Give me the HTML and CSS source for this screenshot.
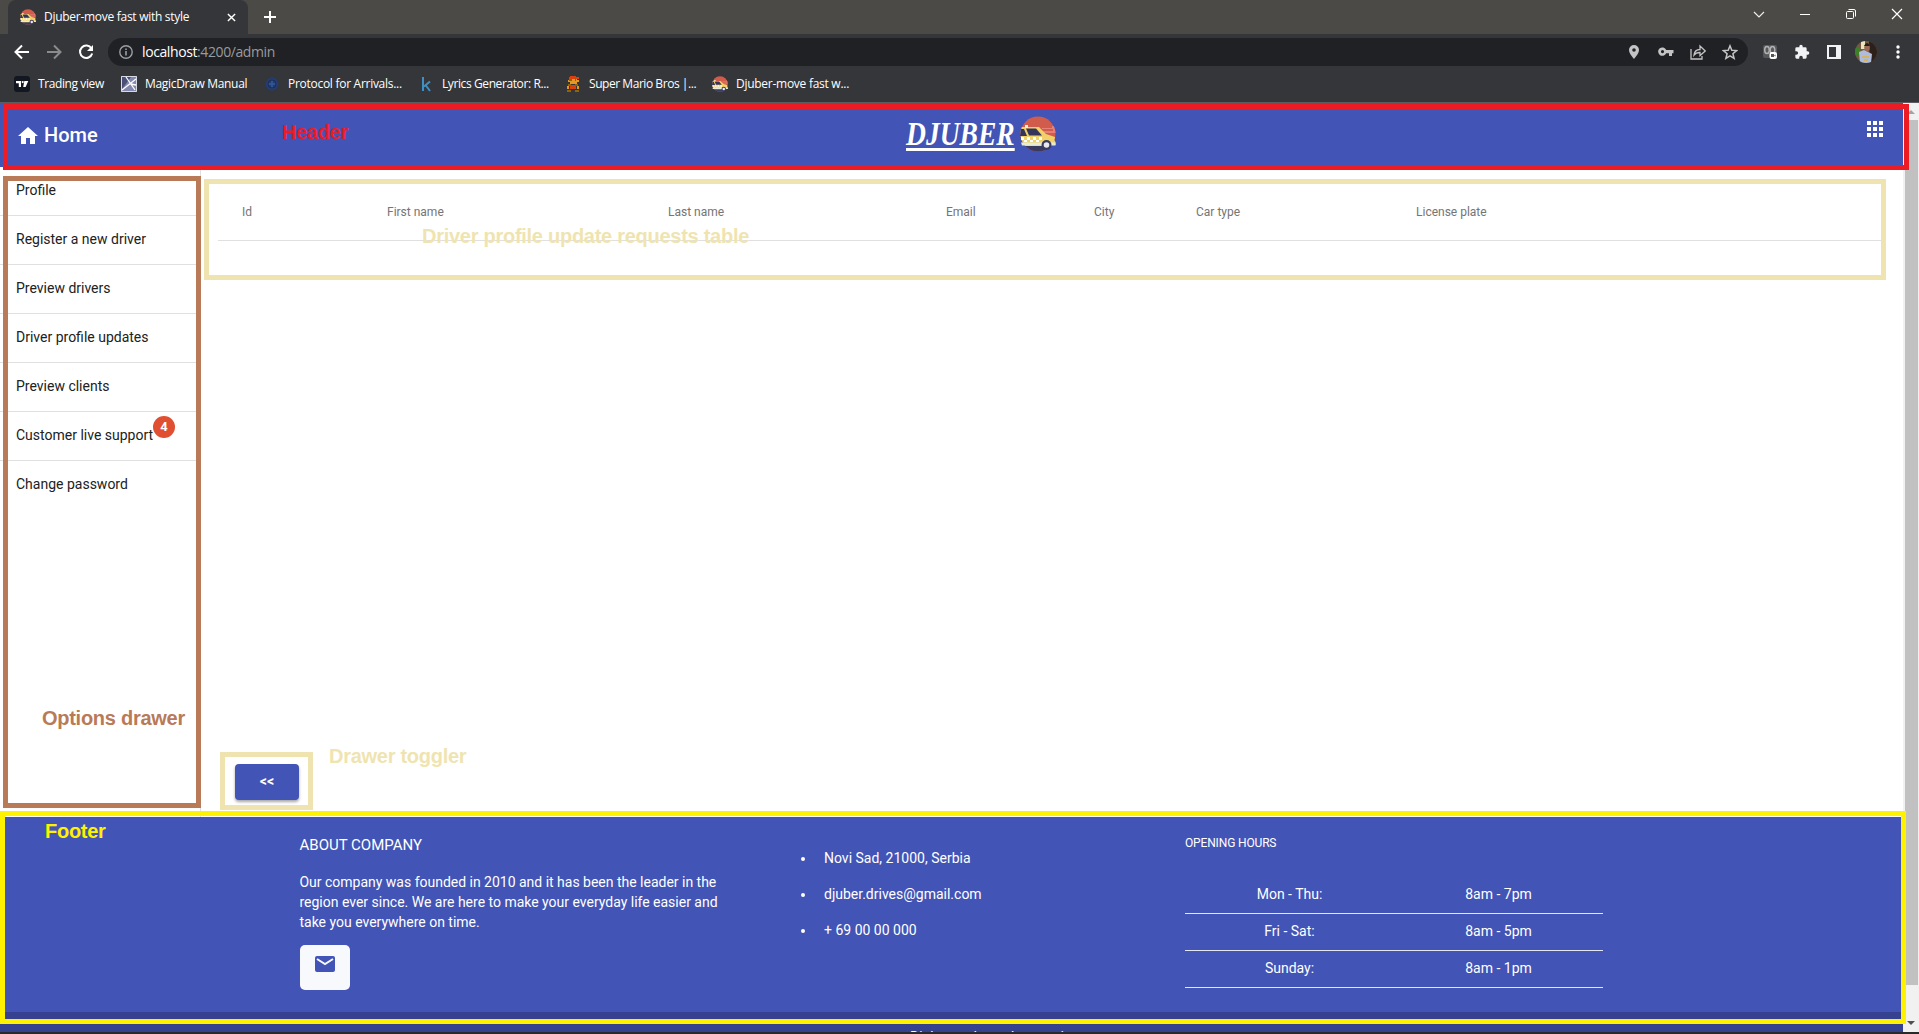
FILE: index.html
```html
<!DOCTYPE html>
<html lang="en">
<head>
<meta charset="utf-8">
<title>Djuber-move fast with style</title>
<link rel="stylesheet" href="styles.css">
</head>
<body>
<svg class="defs" width="0" height="0">
  <symbol id="taxi" viewBox="0 0 36 36">
    <clipPath id="disc"><circle cx="18" cy="18" r="17.500"/></clipPath>
    <g clip-path="url(#disc)">
      <rect width="36" height="36" fill="#d15c4b"/>
      <path d="M18 15h15v-2H22v-1h10v-2h4v7H18z" fill="#e58178"/>
      <path d="M0 28h36v8H0z" fill="#3b3b60"/>
      <path d="M0 11h19l7 7 9 3v9H0z" fill="#f1d268"/>
    </g>
    <path d="M24 19l9 3 2.500 4v3H24z" fill="#f1d268"/>
    <path d="M1 13h3l3 7H0zM6 12.500h10l6 7H9z" fill="#35355c"/>
    <path d="M5 9h3v3H5z" fill="#fff3c4"/>
    <path d="M1 21h3v3H1zM7 21h3v3H7zM13 21h3v3h-3zM19 21h3v3h-3zM4 24h3v2H4zM10 24h3v2h-3zM16 24h3v2h-3z" fill="#fff"/>
    <path d="M1 26.500h34.500v3H2z" fill="#e6ecd8"/>
    <circle cx="26.500" cy="29" r="5" fill="#3b3b60"/><circle cx="26.500" cy="29" r="2.800" fill="#e8e8ee"/>
  </symbol>
</svg>

<div class="browser">
  <div class="tabstrip">
    <div class="tab">
      <svg class="fav"><use href="#taxi"/></svg>
      <span class="tab-title">Djuber-move fast with style</span>
      <svg class="tab-close" viewBox="0 0 10 10"><path d="M1 1l8 8M9 1L1 9" stroke="#fff" stroke-width="1.600"/></svg>
    </div>
    <svg class="plus" viewBox="0 0 12 12"><path d="M6 0v12M0 6h12" stroke="#fff" stroke-width="2"/></svg>
    <div class="window-controls">
      <svg viewBox="0 0 12 12"><path d="M1 4l5 5 5-5" fill="none" stroke="#eee" stroke-width="1.200"/></svg>
      <svg viewBox="0 0 12 12"><path d="M1 6.500h10" stroke="#fff"/></svg>
      <svg viewBox="0 0 12 12"><rect x="1.500" y="3.500" width="7" height="7" rx="1" fill="none" stroke="#fff"/><path d="M3.500 1.500H9a1.500 1.500 0 0 1 1.500 1.500v5.500" fill="none" stroke="#fff"/></svg>
      <svg viewBox="0 0 12 12"><path d="M1 1l10 10M11 1L1 11" stroke="#fff" stroke-width="1.200"/></svg>
    </div>
  </div>
  <div class="toolbar">
    <div class="nav">
      <svg viewBox="0 0 16 16"><path d="M15 8H2M8 1.500L1.500 8 8 14.500" fill="none" stroke="#fff" stroke-width="2"/></svg>
      <svg viewBox="0 0 16 16"><path d="M1 8h13M8 1.500L14.500 8 8 14.500" fill="none" stroke="#8a8b8d" stroke-width="2"/></svg>
      <svg viewBox="0 0 16 16"><path d="M13.500 4.500A6.200 6.200 0 1 0 14.200 9.500" fill="none" stroke="#fff" stroke-width="2"/><path d="M15 1v6H9z" fill="#fff"/></svg>
    </div>
    <div class="omnibox">
      <svg class="info" viewBox="0 0 14 14"><circle cx="7" cy="7" r="6.200" fill="none" stroke="#9aa0a6" stroke-width="1.400"/><path d="M7 6v4.500M7 3.500v1.500" stroke="#9aa0a6" stroke-width="1.600"/></svg>
      <span class="url">localhost<span class="url-rest">:4200/admin</span></span>
      <div class="omni-actions">
        <svg viewBox="0 0 16 16"><path fill-rule="evenodd" d="M8 1a5 5 0 0 0-5 5c0 3.500 5 9 5 9s5-5.500 5-9a5 5 0 0 0-5-5zm0 3.200a1.800 1.800 0 1 1 0 3.600 1.800 1.800 0 0 1 0-3.600z" fill="#c4c4c4"/></svg>
        <svg viewBox="0 0 16 16"><path fill-rule="evenodd" d="M8.200 6H15.500v3.200H14V12h-3V9.200H8.200A4.200 4.200 0 1 1 8.200 6zM4.500 6a1.600 1.600 0 1 0 0 3.200 1.600 1.600 0 0 0 0-3.200z" fill="#c4c4c4"/></svg>
        <svg viewBox="0 0 16 16"><path d="M1 5v10h11v-3M4 11c.5-4 3-5.500 6-5.500V2l5.300 5L10 11.500V8.500C7.500 8.500 5.500 9 4 11z" fill="none" stroke="#c4c4c4" stroke-width="1.300"/></svg>
        <svg viewBox="0 0 16 16"><path d="M8 1.800l1.800 4.400 4.800.4-3.700 3.100 1.200 4.700L8 11.900l-4.100 2.500 1.200-4.700L1.400 6.600l4.800-.4z" fill="none" stroke="#c4c4c4" stroke-width="1.500"/></svg>
      </div>
    </div>
    <div class="extensions">
      <svg viewBox="0 0 16 16"><rect x="1" y="1" width="14" height="13" rx="2" fill="#57585a"/><ellipse cx="5" cy="6" rx="2.300" ry="3.500" fill="none" stroke="#b0b0b0" stroke-width="1.500"/><ellipse cx="10.500" cy="6" rx="2.300" ry="3.500" fill="none" stroke="#b0b0b0" stroke-width="1.500"/><rect x="7.500" y="8" width="7.500" height="7" rx="2" fill="#fff"/><path d="M9 10h3v3H9zM12 11.500l1.500-1v2z" fill="#555"/></svg>
      <svg viewBox="0 0 24 24"><path d="M20.500 11H19V7a2 2 0 0 0-2-2h-4V3.500a2.500 2.500 0 0 0-5 0V5H4a2 2 0 0 0-2 2v3.800h1.500a2.700 2.700 0 0 1 0 5.400H2V20a2 2 0 0 0 2 2h3.800v-1.500a2.700 2.700 0 0 1 5.400 0V22H17a2 2 0 0 0 2-2v-4h1.500a2.500 2.500 0 0 0 0-5z" fill="#f1f3f4"/></svg>
      <svg viewBox="0 0 16 16"><path fill-rule="evenodd" d="M1 1h14v14H1zM3 3v10h7V3z" fill="#f1f3f4"/></svg>
      <svg class="avatar" viewBox="0 0 22 22"><clipPath id="av"><circle cx="11" cy="11" r="11"/></clipPath><g clip-path="url(#av)"><path fill="#705b43" d="M0 0h22v22H0z"/><path fill="#eee4bd" d="M6 0h4v8H6z"/><path fill="#3c8027" d="M0 7h5v7H0z"/><path fill="#2d1f1a" d="M14 0h8v22h-7z"/><path fill="#aebddd" d="M4 11l5-2 4 2 4 2-1 9H5z"/><ellipse cx="12" cy="6.500" rx="2.800" ry="3.800" fill="#9b6a55"/><path fill="#241b1b" d="M9 5q3-6 6 0z"/><path fill="#d8b55d" d="M7 15h7v2H7zM9 18h4v2H9z"/></g></svg>
      <svg viewBox="0 0 16 16"><circle cx="8" cy="3" r="1.700" fill="#fff"/><circle cx="8" cy="8" r="1.700" fill="#fff"/><circle cx="8" cy="13" r="1.700" fill="#fff"/></svg>
    </div>
  </div>
  <div class="bookmarks">
    <span class="bm bm1"><svg viewBox="0 0 16 16"><rect width="16" height="16" rx="3" fill="#131722"/><path d="M2 5h5v6H4.800V7.300H2zM10.300 5h4l-2.700 6H9.200z" fill="#fff"/><circle cx="8.700" cy="6.100" r="1.100" fill="#fff"/></svg><span>Trading view</span></span>
    <span class="bm bm2"><svg viewBox="0 0 16 16"><path fill="#8289ad" d="M0 0h16v16H0z"/><path fill="#4b5078" d="M1 1h9L1 13z"/><path d="M1 14L15 3M5 1l9 13M10 8l5 1" stroke="#fff" stroke-width="1.300"/><path d="M.5.500h15v15H.5z" fill="none" stroke="#d7d9e5"/></svg><span>MagicDraw Manual</span></span>
    <span class="bm bm3"><svg viewBox="0 0 16 16"><circle cx="8" cy="8" r="6.500" fill="#233d73"/><path d="M8 4v8M4 8h8" stroke="#34589b" stroke-width="1.500"/><circle cx="8" cy="8" r="4" fill="none" stroke="#1d2e55"/></svg><span>Protocol for Arrivals...</span></span>
    <span class="bm bm4"><svg viewBox="0 0 16 16"><path d="M5 1v14M12 5.500L6 10.500M7.500 9l4.500 6" fill="none" stroke="#3d8fc4" stroke-width="2"/></svg><span>Lyrics Generator: R...</span></span>
    <span class="bm bm5"><svg viewBox="0 0 16 16"><path fill="#d8400c" d="M5 0h6v1h3v2H4V1h1zM5 9h6v4H5z"/><path fill="#e39a25" d="M4 3h8v1h2v2h-2v2H5V6H3V4h1zM2 10h2v3H2zM12 10h2v3h-2z"/><path fill="#8c6508" d="M4 3h3v2H4zM10 3h1v2h-1zM3 8h3v2H3zM10 8h3v2h-3zM2 14h4v2H2zM10 14h4v2h-4z"/></svg><span>Super Mario Bros |...</span></span>
    <span class="bm bm6"><svg><use href="#taxi"/></svg><span>Djuber-move fast w...</span></span>
  </div>
</div>

<div class="viewport">
  <div class="page">
    <header class="header">
      <a class="home"><svg viewBox="0 0 20 17"><path d="M10 0L0 9h3v8h5v-6h4v6h5V9h3z" fill="#fff"/></svg><span>Home</span></a>
      <div class="brand"><span class="brand-name">DJUBER</span><svg><use href="#taxi"/></svg></div>
      <svg class="apps" viewBox="0 0 16 16"><path d="M0 0h4v4H0zM6 0h4v4H6zM12 0h4v4h-4zM0 6h4v4H0zM6 6h4v4H6zM12 6h4v4h-4zM0 12h4v4H0zM6 12h4v4H6zM12 12h4v4h-4z" fill="#fff"/></svg>
    </header>
    <div class="content">
      <nav class="drawer">
        <a>Profile</a>
        <a>Register a new driver</a>
        <a>Preview drivers</a>
        <a>Driver profile updates</a>
        <a>Preview clients</a>
        <a>Customer live support<span class="badge">4</span></a>
        <a>Change password</a>
      </nav>
      <main class="main">
        <div class="table-head">
          <span>Id</span><span>First name</span><span>Last name</span><span>Email</span><span>City</span><span>Car type</span><span>License plate</span>
        </div>
        <button class="toggle">&lt;&lt;</button>
      </main>
    </div>
    <footer class="footer">
      <div class="footer-cols">
        <section class="about">
          <h2>ABOUT COMPANY</h2>
          <p>Our company was founded in 2010 and it has been the leader in the<br>region ever since. We are here to make your everyday life easier and<br>take you everywhere on time.</p>
          <a class="mail"><svg viewBox="0 0 20 16"><path d="M2 0h16a2 2 0 0 1 2 2v12a2 2 0 0 1-2 2H2a2 2 0 0 1-2-2V2a2 2 0 0 1 2-2z" fill="#4254b5"/><path d="M2 3l8 5 8-5" fill="none" stroke="#f8f9fc" stroke-width="2"/></svg></a>
        </section>
        <ul class="contact">
          <li>Novi Sad, 21000, Serbia</li>
          <li>djuber.drives@gmail.com</li>
          <li>+ 69 00 00 000</li>
        </ul>
        <section class="hours">
          <h3>OPENING HOURS</h3>
          <div class="hour-row"><span>Mon - Thu:</span><span>8am - 7pm</span></div>
          <div class="hour-row"><span>Fri - Sat:</span><span>8am - 5pm</span></div>
          <div class="hour-row"><span>Sunday:</span><span>8am - 1pm</span></div>
        </section>
      </div>
      <div class="copyright">Djuber and your best taxi</div>
    </footer>
  </div>
  <div class="scrollbar">
    <svg viewBox="0 0 8 4"><path d="M0 4l4-4 4 4z" fill="#a3a3a3"/></svg>
    <div class="thumb"></div>
    <svg class="down" viewBox="0 0 8 4"><path d="M0 0l4 4 4-4z" fill="#505050"/></svg>
  </div>
</div>

<div class="note note-header"></div><span class="label label-header">Header</span>
<div class="note note-drawer"></div><span class="label label-drawer">Options drawer</span>
<div class="note note-table"></div><span class="label label-table">Driver profile update requests table</span>
<div class="note note-toggle"></div><span class="label label-toggle">Drawer toggler</span>
<div class="note note-footer"></div><span class="label label-footer">Footer</span>
</body>
</html>
```
FILE: styles.css
```css
* { box-sizing: border-box; }
body {
  margin: 0;
  width: 1919px;
  height: 1034px;
  overflow: hidden;
  position: relative;
  display: flex;
  flex-direction: column;
  background: #fff;
  font-family: Roboto, "Liberation Sans", sans-serif;
}
svg { display: block; flex: none; }
.defs { position: absolute; }

/* Browser window */
.browser {
  height: 103px;
  background: #35363a;
  border-bottom: 1px solid #5b5c60;
  font-family: "Open Sans", "Noto Sans", sans-serif;
  font-size: 12px;
  color: #fff;
}
.tabstrip { height: 34px; background: #4c4a46; display: flex; align-items: center; padding-left: 8px; }
.tab {
  width: 240px;
  height: 34px;
  background: #35363a;
  border-radius: 8px 8px 0 0;
  display: flex;
  align-items: center;
  padding: 0 12px;
}
.fav { width: 16px; height: 16px; }
.tab-title { margin-left: 8px; padding-bottom: 1px; letter-spacing: -0.28px; width: 183px; white-space: nowrap; }
.tab-close { width: 9px; height: 9px; }
.plus { width: 12px; height: 12px; margin-left: 16px; }
.window-controls { margin-left: auto; display: flex; gap: 34px; padding: 0 16px 6px 0; }
.window-controls svg { width: 12px; height: 12px; }
.toolbar { height: 36px; display: flex; align-items: center; }
.nav { display: flex; gap: 16px; padding-left: 14px; width: 108px; }
.nav svg { width: 16px; height: 16px; }
.omnibox {
  width: 1640px;
  height: 28px;
  border-radius: 14px;
  background: #202124;
  display: flex;
  align-items: center;
  padding: 0 10px 0 11px;
}
.info { width: 14px; height: 14px; }
.url { font-size: 14px; margin-left: 9px; padding-bottom: 1px; letter-spacing: -0.4px; }
.url-rest { color: #989b9f; }
.omni-actions { margin-left: auto; display: flex; gap: 16px; }
.omni-actions svg { width: 16px; height: 16px; }
.extensions { display: flex; align-items: center; gap: 16px; margin-left: 14px; }
.extensions svg { width: 16px; height: 16px; }
.extensions .avatar { width: 22px; height: 22px; margin: 0 -3px; }
.bookmarks { height: 28px; display: flex; align-items: center; padding-left: 14px; }
.bm { display: flex; align-items: center; gap: 8px; white-space: nowrap; letter-spacing: -0.32px; }
.bm span { padding-bottom: 1px; }
.bm svg { width: 16px; height: 16px; }
.bm1 { width: 107px; letter-spacing: -0.4px; }
.bm2 { width: 143px; }
.bm3 { width: 154px; letter-spacing: -0.28px; }
.bm4 { width: 147px; letter-spacing: -0.4px; }
.bm5 { width: 147px; letter-spacing: -0.45px; }
.bm6 { letter-spacing: -0.27px; }

/* Application page */
.viewport { height: 931px; display: flex; border-bottom: 2px solid #2b2a2a; }
.page { width: 1903px; height: 929px; overflow: hidden; }
.header {
  height: 64px;
  background: #4254b5;
  display: grid;
  grid-template-columns: 1fr 150px 1fr;
  align-items: center;
  padding: 0 20px 0 18px;
}
.home { display: flex; align-items: center; gap: 6px; color: #fff; font-size: 20px; font-weight: 500; }
.home svg { width: 20px; height: 17px; }
.brand { display: flex; align-items: center; height: 40px; padding-bottom: 2px; margin-left: 30px; }
.brand-name {
  width: 114px;
  flex: none;
  font: italic bold 33px/36px "Liberation Serif", serif;
  color: #fff;
  text-decoration: underline;
  text-decoration-thickness: 3px;
  text-underline-offset: 3px;
  transform: scaleX(.835);
  transform-origin: left;
}
.brand svg { width: 36px; height: 36px; }
.apps { width: 16px; height: 16px; justify-self: end; margin-bottom: 12px; }
.content { height: 650px; display: flex; }
.drawer {
  width: 201px;
  border-right: 1px solid #e0e0e0;
  display: flex;
  flex-direction: column;
}
.drawer a {
  height: 49px;
  border-bottom: 1px solid #e0e0e0;
  padding-left: 16px;
  font-size: 14px;
  line-height: 46px;
  color: #212121;
  position: relative;
  white-space: nowrap;
}
.drawer a:last-child { border-bottom: 0; }
.badge {
  position: absolute;
  left: 153px;
  top: 4px;
  width: 22px;
  height: 22px;
  border-radius: 50%;
  background: #e04f31;
  color: #fff;
  font-size: 13px;
  font-weight: 700;
  line-height: 22px;
  text-align: center;
}
.main { flex: 1; display: flex; flex-direction: column; justify-content: space-between; align-items: flex-start; padding: 18px 21px 17px 17px; }
.table-head {
  width: 1664px;
  height: 56px;
  border-bottom: 1px solid #e0e0e0;
  display: grid;
  grid-template-columns: 145px 281px 278px 148px 102px 220px 1fr;
  align-items: center;
  padding: 0 0 2px 24px;
  font-size: 12px;
  color: #757575;
}
.toggle {
  width: 64px;
  height: 36px;
  margin-left: 17px;
  border: 0;
  border-radius: 4px;
  background: #4254b5;
  box-shadow: 0 2px 3px rgba(0, 0, 0, .35);
  color: #fff;
  font: 700 14px Roboto, sans-serif;
  padding: 0 0 2px;
}

/* Footer */
.footer { background: #4254b5; color: #fff; height: 214px; }
.footer-cols { height: 195px; display: flex; padding-left: 299.5px; font-size: 14px; }
.about { width: 482px; padding-top: 17px; }
.about h2 { margin: 0; font-size: 15px; font-weight: 400; line-height: 22px; }
.about p { margin: 16px 0 13px; line-height: 20px; white-space: nowrap; letter-spacing: -0.01px; }
.mail { width: 50px; height: 45px; border-radius: 5px; background: #f8f9fc; display: flex; justify-content: center; padding-top: 11px; }
.mail svg { width: 20px; height: 16px; }
.contact { margin: 0; padding: 24px 0 0 43px; width: 403.5px; list-style: none; }
.contact li { height: 36px; line-height: 34px; display: flex; align-items: flex-start; margin-left: -24px; }
.contact li::before { content: ""; width: 4px; height: 4px; border-radius: 50%; background: #fff; margin: 16px 19.5px 0 0; }
.hours { width: 418px; padding-top: 17px; }
.hours h3 { margin: 0 0 25px; font-size: 12px; font-weight: 400; line-height: 18px; letter-spacing: -0.15px; }
.hour-row { height: 37px; border-bottom: 1px solid #e3e6f4; display: grid; grid-template-columns: 1fr 1fr; text-align: center; line-height: 34px; }
.copyright { height: 40px; background: #36428f; font-size: 14px; line-height: 20px; padding: 15px 0 0 910px; }

.scrollbar { width: 16px; background: #f1f1f1; display: flex; flex-direction: column; align-items: center; padding-top: 7px; }
.scrollbar svg { width: 8px; height: 4px; }
.thumb { width: 13px; height: 865px; margin-top: 6px; background: #c1c1c1; }
.scrollbar .down { margin-top: 36px; }

/* Annotation frames over the page */
.note { position: absolute; border: 5px solid; }
.note-header { left: 3px; top: 104px; width: 1906px; height: 66px; color: #ed1c24; }
.note-drawer { left: 3px; top: 176px; width: 198px; height: 632px; color: #b97a57; }
.note-table { left: 204px; top: 179px; width: 1682px; height: 101px; color: #efe4b0; }
.note-toggle { left: 220px; top: 752px; width: 93px; height: 58px; color: #efe4b0; }
.note-footer { left: 0; top: 811px; width: 1906px; height: 213px; color: #fff200; }
.label { position: absolute; font: bold 20px/24px "Liberation Sans", Arial, sans-serif; white-space: nowrap; letter-spacing: -0.27px; }
.label-header { left: 282px; top: 120px; color: #ed1c24; }
.label-drawer { left: 42px; top: 706px; color: #b97a57; }
.label-table { left: 422px; top: 224px; color: #efe4b0; }
.label-toggle { left: 329px; top: 744px; color: #efe4b0; }
.label-footer { left: 45px; top: 819px; color: #fff200; }
```
